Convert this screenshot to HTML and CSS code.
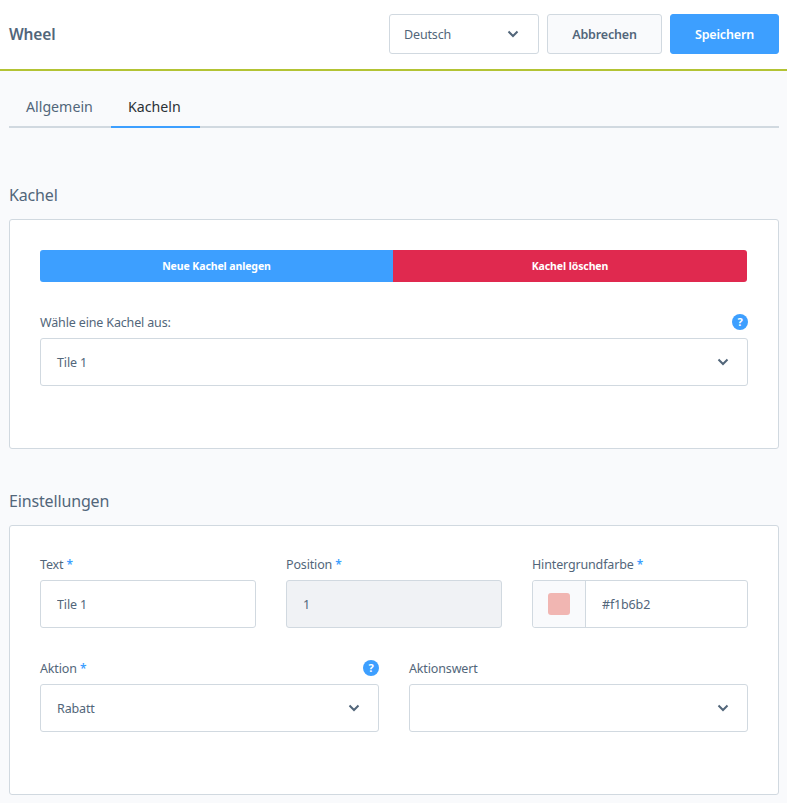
FILE: index.html
```html
<!DOCTYPE html>
<html lang="de">
<head>
    <meta charset="UTF-8">
    <meta name="viewport" content="width=device-width, initial-scale=1.0">
    <title>Wheel</title>
    <link rel="stylesheet" href="styles.css">
</head>
<body>

<header class="topbar">
    <h1 class="topbar-title">Wheel</h1>
    <div class="topbar-actions">
        <div class="select select-lang">
            <span>Deutsch</span>
            <svg class="chevron" viewBox="0 0 12 8"><path d="M1.5 1.5 6 6l4.5-4.5"/></svg>
        </div>
        <button class="btn btn-cancel" type="button">Abbrechen</button>
        <button class="btn btn-save" type="button">Speichern</button>
    </div>
</header>

<main class="content">
    <nav class="tabs">
        <a class="tab">Allgemein</a>
        <a class="tab tab-active">Kacheln</a>
    </nav>

    <h2 class="section-title section-first">Kachel</h2>
    <section class="card card-tile">
        <div class="btn-group">
            <button class="group-btn group-new" type="button">Neue Kachel anlegen</button>
            <button class="group-btn group-delete" type="button">Kachel löschen</button>
        </div>
        <div class="field field-select-tile">
            <div class="field-label">
                <label>Wähle eine Kachel aus:</label>
                <span class="help">?</span>
            </div>
            <div class="select">
                <span>Tile 1</span>
                <svg class="chevron" viewBox="0 0 12 8"><path d="M1.5 1.5 6 6l4.5-4.5"/></svg>
            </div>
        </div>
    </section>

    <h2 class="section-title">Einstellungen</h2>
    <section class="card card-settings">
        <div class="row row-3">
            <div class="field">
                <div class="field-label"><label>Text <i>*</i></label></div>
                <input class="input" type="text" value="Tile 1">
            </div>
            <div class="field">
                <div class="field-label"><label>Position <i>*</i></label></div>
                <input class="input" type="text" value="1" disabled>
            </div>
            <div class="field">
                <div class="field-label"><label>Hintergrundfarbe <i>*</i></label></div>
                <div class="color-input">
                    <div class="color-addon"><span class="swatch"></span></div>
                    <input type="text" value="#f1b6b2">
                </div>
            </div>
        </div>
        <div class="row row-2">
            <div class="field">
                <div class="field-label">
                    <label>Aktion <i>*</i></label>
                    <span class="help">?</span>
                </div>
                <div class="select">
                    <span>Rabatt</span>
                    <svg class="chevron" viewBox="0 0 12 8"><path d="M1.5 1.5 6 6l4.5-4.5"/></svg>
                </div>
            </div>
            <div class="field">
                <div class="field-label"><label>Aktionswert</label></div>
                <div class="select">
                    <span></span>
                    <svg class="chevron" viewBox="0 0 12 8"><path d="M1.5 1.5 6 6l4.5-4.5"/></svg>
                </div>
            </div>
        </div>
    </section>
</main>

</body>
</html>
```

FILE: styles.css
```css
* {
    box-sizing: border-box;
}
body {
    font-family: "Noto Sans", "Open Sans", sans-serif;
    font-size: 12.5px;
    letter-spacing: -0.15px;
    color: #52667a;
    margin: 0;
    padding: 0;
    background-color: #f9fafc;
}

/* top bar */
.topbar {
    height: 71px;
    background-color: #fff;
    border-bottom: 2px solid #b3c334;
    padding: 0 8px 1px 9px;
    display: flex;
    align-items: center;
    justify-content: space-between;
}
.topbar-title {
    font-size: 15.5px;
    font-weight: 600;
    margin: 0;
}
.topbar-actions {
    display: flex;
    gap: 8px;
}
.btn {
    height: 40px;
    border-radius: 3px;
    border: 1px solid #d1d9e0;
    font-family: inherit;
    font-size: 12.5px;
    letter-spacing: inherit;
    font-weight: 600;
    padding: 0;
}
.btn-cancel {
    width: 115px;
    background-color: #f9fafc;
    color: #52667a;
}
.btn-save {
    width: 109px;
    background-color: #3d9fff;
    border-color: #3d9fff;
    color: #fff;
}

/* select */
.select {
    height: 48px;
    background-color: #fff;
    border: 1px solid #d1d9e0;
    border-radius: 3px;
    padding: 0 18px 0 16px;
    display: flex;
    align-items: center;
    justify-content: space-between;
}
.select-lang {
    width: 150px;
    height: 40px;
    padding: 0 19px 0 14px;
}
.chevron {
    width: 12px;
    height: 8px;
    fill: none;
    stroke: #52667a;
    stroke-width: 2;
}

/* tabs */
.content {
    padding: 0 8px 0 9px;
}
.tabs {
    display: flex;
    gap: 2px;
    height: 57px;
    border-bottom: 2px solid #d1d9e0;
}
.tab {
    font-size: 14.2px;
    letter-spacing: 0;
    padding: 0 17px;
    line-height: 71px;
    height: 57px;
    width: 100px;
    white-space: nowrap;
}
.tab-active {
    width: 89px;
    color: #2b3136;
    border-bottom: 2px solid #3d9fff;
}

/* sections */
.section-title {
    font-size: 16px;
    font-weight: 400;
    line-height: 24px;
    margin: 40px 0 12px;
}
.section-first {
    margin-top: 55px;
}
.card {
    background-color: #fff;
    border: 1px solid #d1d9e0;
    border-radius: 3px;
    padding: 30px;
}
.card-tile {
    height: 230px;
}
.card-settings {
    height: 270px;
}

.btn-group {
    display: flex;
    margin-right: 1px;
}
.group-btn {
    height: 32px;
    border: 0;
    color: #fff;
    font-family: inherit;
    font-size: 10.5px;
    letter-spacing: -0.1px;
    font-weight: 700;
    padding: 0 0 1px;
}
.group-new {
    width: 353px;
    background-color: #3d9fff;
    border-radius: 3px 0 0 3px;
}
.group-delete {
    width: 354px;
    background-color: #e0294f;
    border-radius: 0 3px 3px 0;
}

/* form fields */
.field-select-tile {
    margin-top: 32px;
}
.field-label {
    height: 16px;
    margin-bottom: 8px;
    display: flex;
    align-items: center;
    justify-content: space-between;
}
.field-label i {
    color: #3d9fff;
    font-style: normal;
    font-size: 12px;
    font-weight: 600;
}
.help {
    width: 16px;
    height: 16px;
    border-radius: 50%;
    background-color: #3d9fff;
    color: #fff;
    font-size: 11px;
    font-weight: 700;
    text-align: center;
    line-height: 16px;
}
.row {
    display: grid;
    gap: 30px;
}
.row-3 {
    grid-template-columns: repeat(3, 216px);
}
.row-2 {
    grid-template-columns: repeat(2, 339px);
    margin-top: 32px;
}
.input {
    width: 100%;
    height: 48px;
    border: 1px solid #d1d9e0;
    border-radius: 3px;
    padding: 0 16px;
    font-family: inherit;
    font-size: 12.5px;
    letter-spacing: inherit;
    color: #52667a;
    background-color: #fff;
}
.input:disabled {
    background-color: #f0f2f5;
}
.color-input {
    display: flex;
    height: 48px;
    background-color: #fff;
    border: 1px solid #d1d9e0;
    border-radius: 3px;
}
.color-addon {
    width: 53px;
    background-color: #f9fafc;
    border-right: 1px solid #d1d9e0;
    border-radius: 3px 0 0 3px;
    display: flex;
    align-items: center;
    justify-content: center;
}
.swatch {
    width: 22px;
    height: 22px;
    border-radius: 3px;
    background-color: #f1b6b2;
}
.color-input input {
    flex: 1;
    min-width: 0;
    border: 0;
    background: none;
    padding: 0 16px;
    font-family: inherit;
    font-size: 12.5px;
    letter-spacing: inherit;
    color: #52667a;
}
```
